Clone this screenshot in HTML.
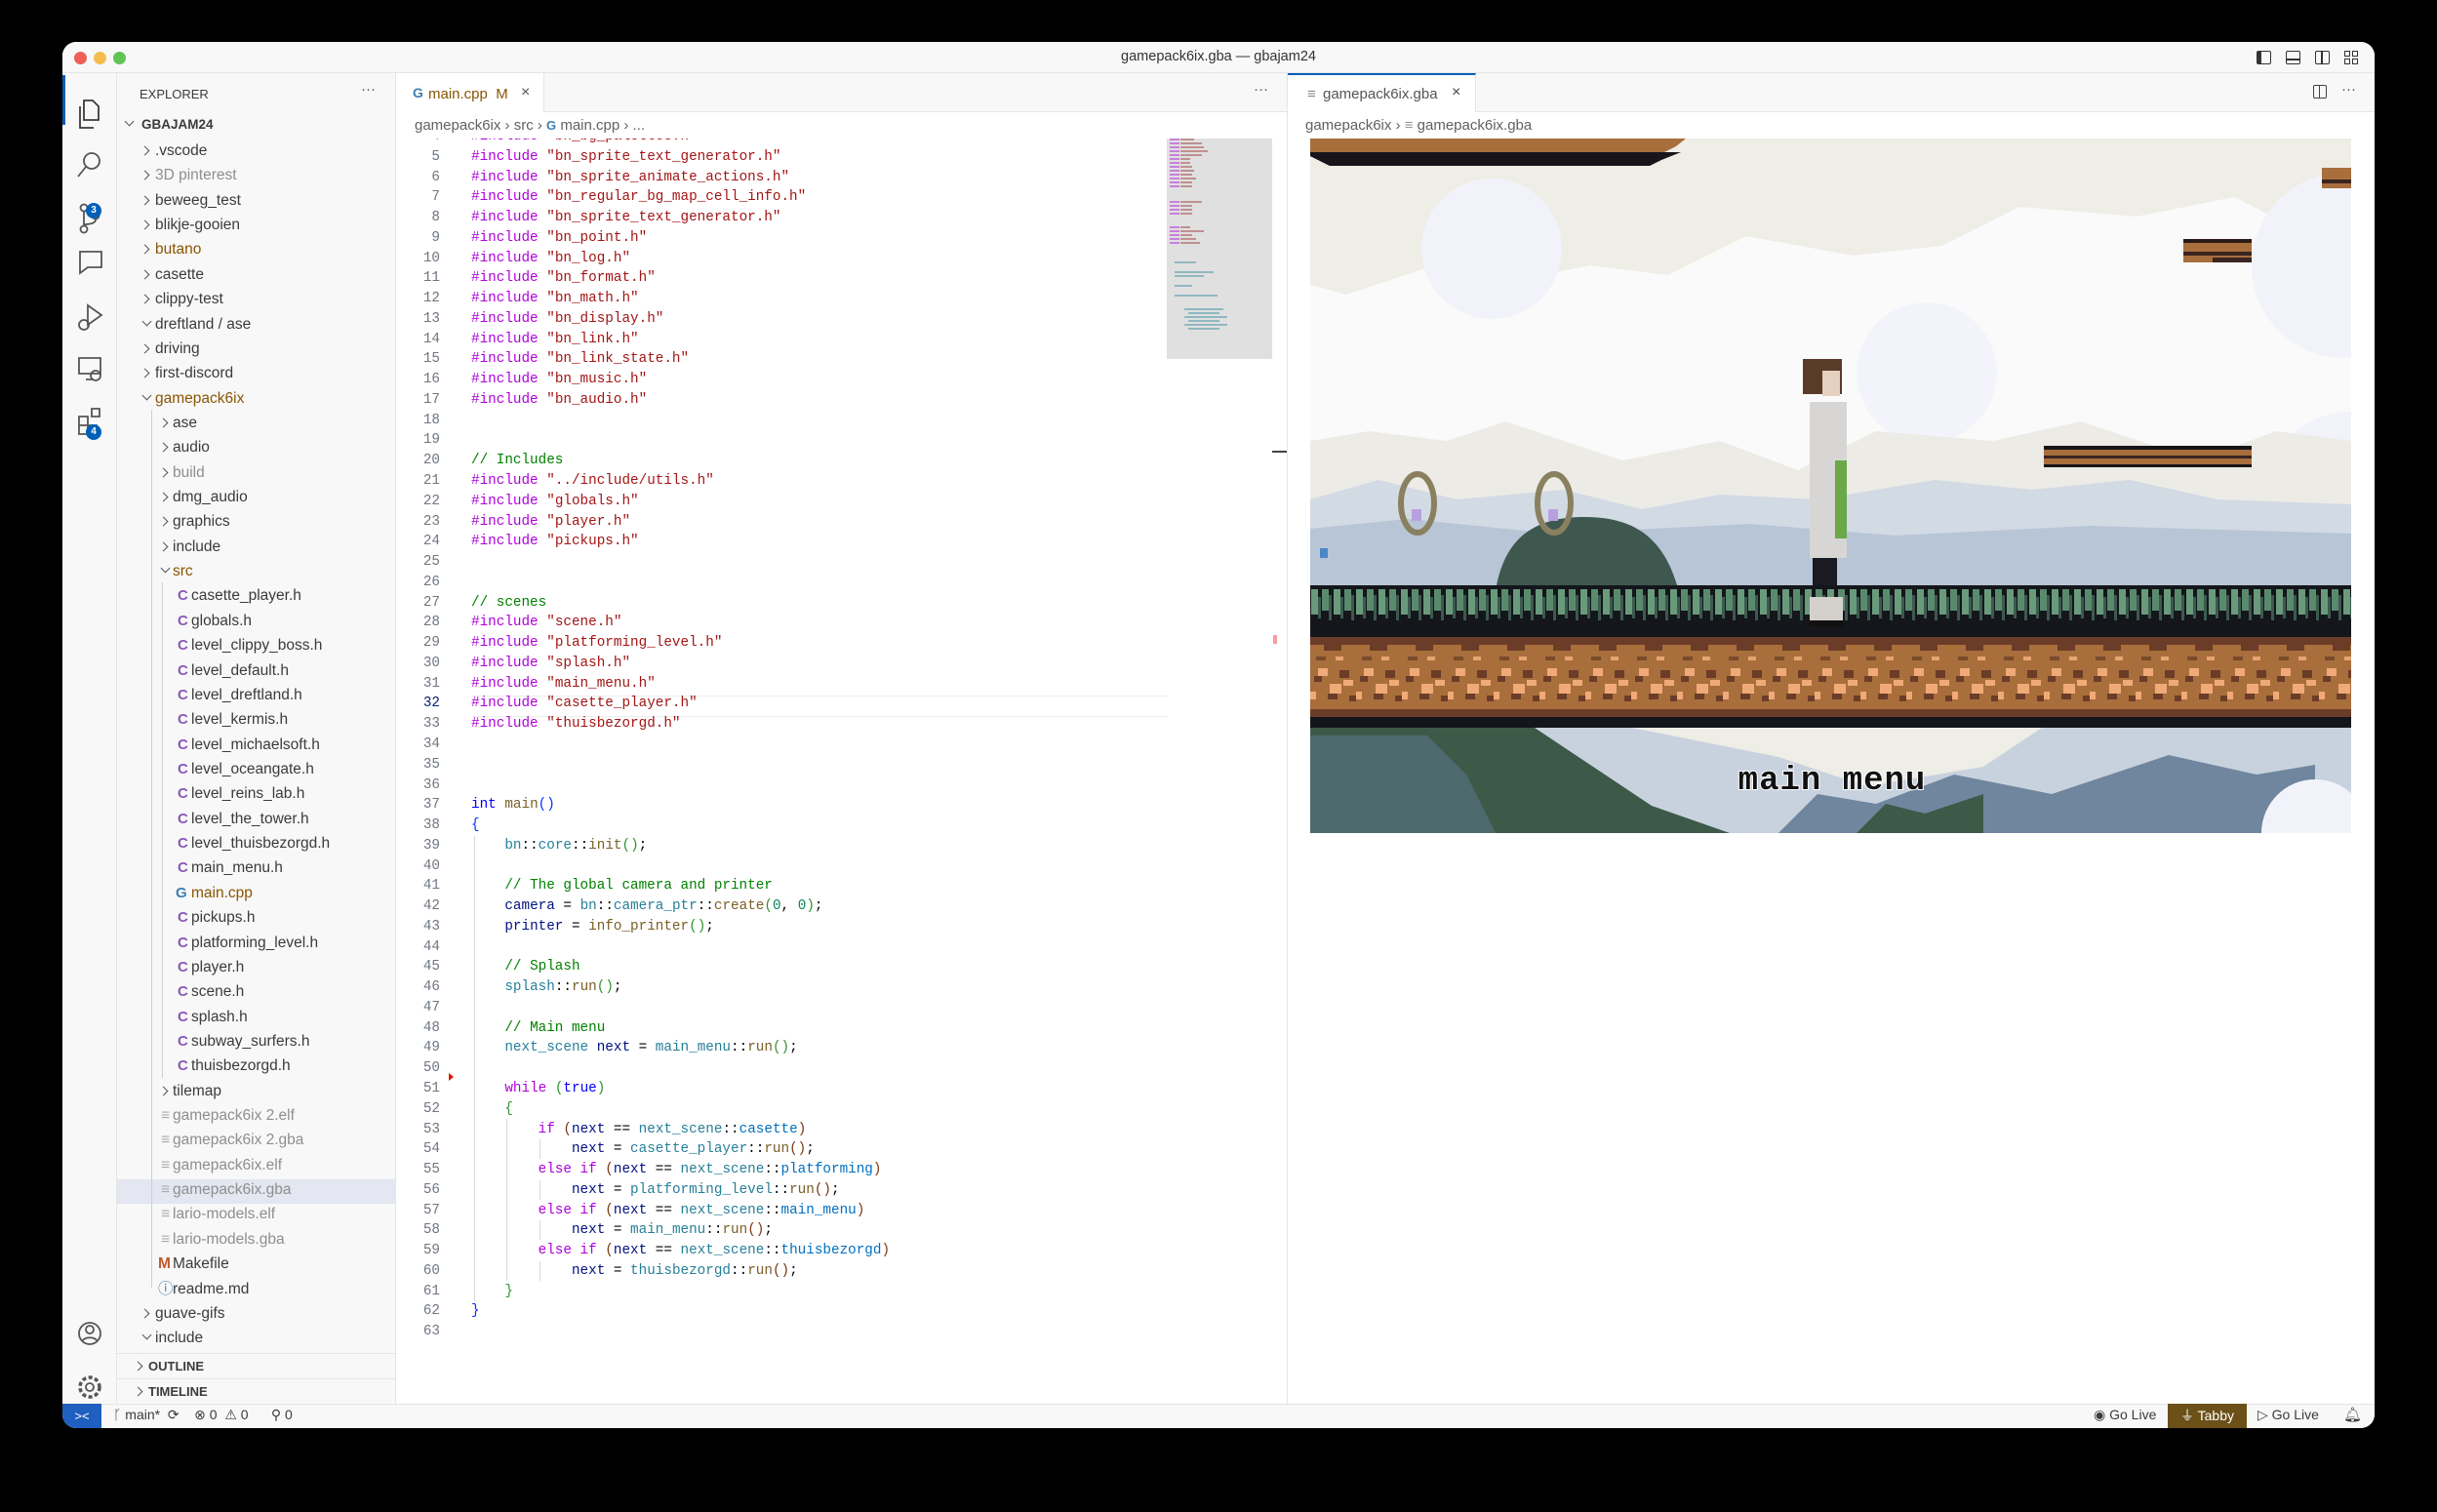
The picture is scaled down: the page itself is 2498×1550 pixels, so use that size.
<!DOCTYPE html>
<html><head><meta charset="utf-8">
<style>
*{margin:0;padding:0;box-sizing:border-box}
body{width:2498px;height:1550px;background:#000;position:relative;overflow:hidden;font-family:"Liberation Sans",sans-serif}
.a{position:absolute}
#win{position:absolute;left:64px;top:43px;width:2370px;height:1421px;background:#f8f8f8;border-radius:14px;overflow:hidden}
.row{position:absolute;left:56px;width:286px;height:25px;line-height:25px;font-size:15.5px;color:#3b3b3b;white-space:nowrap}
.chev{position:absolute;width:7px;height:7px;border-right:1.4px solid #555;border-bottom:1.4px solid #555}
.cr{transform:rotate(-45deg)}
.cd{transform:rotate(45deg)}
.mod{color:#895503}
.ign{color:#8e8e8e}
.dot{position:absolute;left:317px;top:9px;width:9px;height:9px;border-radius:50%;background:#c5b69a}
.ci{position:absolute;color:#8959b8;font-weight:bold;font-size:15px}
#code{position:absolute;left:342px;top:99px;width:913px;height:1298px;background:#fff;overflow:hidden}
.ln{position:absolute;left:0;width:45px;text-align:right;font-family:"Liberation Mono",monospace;font-size:14.3px;color:#6e7681;white-space:pre}
.tx{position:absolute;left:77px;font-family:"Liberation Mono",monospace;font-size:14.3px;color:#000;white-space:pre}
.k{color:#af00db}.s{color:#a31515}.c{color:#008000}.b{color:#0000ff}.v{color:#001080}.f{color:#795e26}.t{color:#267f99}.n{color:#098658}
.p1{color:#0431fa}.p2{color:#319331}.p3{color:#7b3814}
.ig{position:absolute;width:1px;background:#d8d8d8}
</style></head><body>
<div id="win">
 <div class="a" style="left:0;top:0;width:2370px;height:32px;background:#f8f8f8;border-bottom:1px solid #e5e5e5"></div>
 <div class="a" style="left:12px;top:10px;width:13px;height:13px;border-radius:50%;background:#ee5f57"></div>
 <div class="a" style="left:32px;top:10px;width:13px;height:13px;border-radius:50%;background:#f5bd4f"></div>
 <div class="a" style="left:52px;top:10px;width:13px;height:13px;border-radius:50%;background:#5fc454"></div>
 <div class="a" style="left:0;top:7px;width:2370px;text-align:center;font-size:14.5px;color:#333">gamepack6ix.gba — gbajam24</div>
 <div class="a" style="left:2249px;top:9px;width:15px;height:14px;border:1.5px solid #333;border-left-width:5px;border-radius:2px"></div>
 <div class="a" style="left:2279px;top:9px;width:15px;height:14px;border:1.5px solid #333;border-radius:2px"></div>
 <div class="a" style="left:2279px;top:17px;width:15px;height:1.5px;background:#333"></div>
 <div class="a" style="left:2309px;top:9px;width:15px;height:14px;border:1.5px solid #333;border-radius:2px"></div>
 <div class="a" style="left:2315px;top:9px;width:1.5px;height:14px;background:#333"></div>
 <div class="a" style="left:2339px;top:9px;width:6px;height:6px;border:1.5px solid #333"></div>
 <div class="a" style="left:2347px;top:9px;width:6px;height:6px;border:1.5px solid #333"></div>
 <div class="a" style="left:2339px;top:17px;width:6px;height:6px;border:1.5px solid #333"></div>
 <div class="a" style="left:2347px;top:17px;width:6px;height:6px;border:1.5px solid #333"></div>

 <div class="a" style="left:0;top:32px;width:56px;height:1364px;background:#f8f8f8;border-right:1px solid #e5e5e5"></div>
 <div class="a" style="left:0;top:34px;width:3px;height:51px;background:#005fb8"></div>
 <svg class="a" style="left:0;top:32px" width="56" height="1364" fill="none" stroke="#555" stroke-width="1.8">
  <path d="M22 28h9l6 6v14H22z M18 34v22h14" stroke="#3b3b3b"/>
  <circle cx="30" cy="90" r="8"/><path d="M24 96l-8 10"/>
  <circle cx="22" cy="138" r="3.5"/><circle cx="22" cy="160" r="3.5"/><circle cx="34" cy="146" r="3.5"/><path d="M22 142v14M34 150c0 6-12 4-12 6"/>
  <path d="M18 183h22v16H26l-8 6z"/>
  <path d="M26 238l14 10-14 10z"/><circle cx="22" cy="258" r="5"/>
  <path d="M17 292h22v16H17zM24 314h8"/><circle cx="34" cy="310" r="5"/>
  <path d="M17 352h9v9h-9zM17 361h9v9h-9zM26 361h9v9h-9zM30 344h8v8h-8z"/>
  <circle cx="28" cy="1292" r="11"/><circle cx="28" cy="1288" r="4"/><path d="M20 1300c3-5 13-5 16 0"/>
  <circle cx="28" cy="1347" r="4"/><circle cx="28" cy="1347" r="10" stroke-dasharray="4 2.5" stroke-width="3.5"/>
 </svg>
 <div class="a" style="left:24px;top:165px;width:16px;height:16px;border-radius:50%;background:#005fb8;color:#fff;font-size:10px;text-align:center;line-height:16px;font-weight:bold">3</div>
 <div class="a" style="left:24px;top:392px;width:16px;height:16px;border-radius:50%;background:#005fb8;color:#fff;font-size:10px;text-align:center;line-height:16px;font-weight:bold">4</div>

 <div class="a" style="left:56px;top:32px;width:286px;height:1364px;background:#f8f8f8;border-right:1px solid #e5e5e5"></div>
 <div class="a" style="left:79px;top:46px;font-size:13px;color:#3b3b3b">EXPLORER</div>
 <div class="a" style="left:306px;top:40px;font-size:15px;color:#555">···</div>
 <div class="row" style="top:72px"><div class="chev cd" style="left:9px;top:6px"></div><span style="position:absolute;left:25px;font-weight:bold;font-size:13.5px">GBAJAM24</span></div>
 <div class="a" style="left:56px;top:1166px;width:286px;height:25px;background:#e4e6f1"></div>
 <div class="a" style="left:91px;top:377px;width:1px;height:900px;background:#d0d0d0"></div>
 <div class="a" style="left:102px;top:554px;width:1px;height:508px;background:#d0d0d0"></div>
 <div id="tree"></div>
 <div class="a" style="left:56px;top:1344px;width:286px;height:1px;background:#e5e5e5"></div>
 <div class="row" style="top:1345px"><div class="chev cr" style="left:18px;top:9px"></div><span style="position:absolute;left:32px;font-weight:bold;font-size:13px">OUTLINE</span></div>
 <div class="a" style="left:56px;top:1370px;width:286px;height:1px;background:#e5e5e5"></div>
 <div class="row" style="top:1371px"><div class="chev cr" style="left:18px;top:9px"></div><span style="position:absolute;left:32px;font-weight:bold;font-size:13px">TIMELINE</span></div>

 <div class="a" style="left:342px;top:32px;width:913px;height:40px;background:#f8f8f8;border-bottom:1px solid #e5e5e5"></div>
 <div class="a" style="left:342px;top:32px;width:152px;height:41px;background:#fff;border-right:1px solid #e5e5e5"></div>
 <div class="a" style="left:359px;top:44px;font-size:14px;color:#3e7fb3;font-weight:bold">G</div>
 <div class="a" style="left:375px;top:45px;font-size:15px;color:#895503">main.cpp&nbsp; M</div>
 <div class="a" style="left:470px;top:43px;font-size:16px;color:#555">×</div>
 <div class="a" style="left:1221px;top:40px;font-size:15px;color:#555">···</div>
 <div class="a" style="left:342px;top:72px;width:913px;height:27px;background:#fff"></div>
 <div class="a" style="left:361px;top:77px;font-size:15px;color:#616161">gamepack6ix&nbsp;›&nbsp;src&nbsp;›&nbsp;<span style="color:#3e7fb3;font-weight:bold;font-size:13px">G</span>&nbsp;main.cpp&nbsp;›&nbsp;...</div>

 <div id="code">
  <div class="a" style="left:77px;top:571px;width:714px;height:22px;border-top:1px solid #eee;border-bottom:1px solid #eee"></div>
  <div class="ig" style="left:80px;top:715px;height:477px"></div>
  <div class="ig" style="left:113px;top:1005px;height:166px"></div>
  <div class="ig" style="left:147px;top:1026px;height:20px"></div>
  <div class="ig" style="left:147px;top:1068px;height:20px"></div>
  <div class="ig" style="left:147px;top:1109px;height:20px"></div>
  <div class="ig" style="left:147px;top:1151px;height:20px"></div>
  <div class="ln" style="top:-12px;line-height:20.76px">4
5
6
7
8
9
10
11
12
13
14
15
16
17
18
19
20
21
22
23
24
25
26
27
28
29
30
31
<span style="color:#0b216f">32</span>
33
34
35
36
37
38
39
40
41
42
43
44
45
46
47
48
49
50
51
52
53
54
55
56
57
58
59
60
61
62
63</div>
  <div class="a" style="left:54px;top:958px;width:0;height:0;border-left:5px solid #e51400;border-top:4px solid transparent;border-bottom:4px solid transparent"></div>
  <div class="tx" style="top:-12px;line-height:20.76px"><span class="k">#include</span> <span class="s">"bn_bg_palettes.h"</span>
<span class="k">#include</span> <span class="s">"bn_sprite_text_generator.h"</span>
<span class="k">#include</span> <span class="s">"bn_sprite_animate_actions.h"</span>
<span class="k">#include</span> <span class="s">"bn_regular_bg_map_cell_info.h"</span>
<span class="k">#include</span> <span class="s">"bn_sprite_text_generator.h"</span>
<span class="k">#include</span> <span class="s">"bn_point.h"</span>
<span class="k">#include</span> <span class="s">"bn_log.h"</span>
<span class="k">#include</span> <span class="s">"bn_format.h"</span>
<span class="k">#include</span> <span class="s">"bn_math.h"</span>
<span class="k">#include</span> <span class="s">"bn_display.h"</span>
<span class="k">#include</span> <span class="s">"bn_link.h"</span>
<span class="k">#include</span> <span class="s">"bn_link_state.h"</span>
<span class="k">#include</span> <span class="s">"bn_music.h"</span>
<span class="k">#include</span> <span class="s">"bn_audio.h"</span>


<span class="c">// Includes</span>
<span class="k">#include</span> <span class="s">"../include/utils.h"</span>
<span class="k">#include</span> <span class="s">"globals.h"</span>
<span class="k">#include</span> <span class="s">"player.h"</span>
<span class="k">#include</span> <span class="s">"pickups.h"</span>


<span class="c">// scenes</span>
<span class="k">#include</span> <span class="s">"scene.h"</span>
<span class="k">#include</span> <span class="s">"platforming_level.h"</span>
<span class="k">#include</span> <span class="s">"splash.h"</span>
<span class="k">#include</span> <span class="s">"main_menu.h"</span>
<span class="k">#include</span> <span class="s">"casette_player.h"</span>
<span class="k">#include</span> <span class="s">"thuisbezorgd.h"</span>



<span class="b">int</span> <span class="f">main</span><span class="p1">()</span>
<span class="p1">{</span>
    <span class="t">bn</span>::<span class="t">core</span>::<span class="f">init</span><span class="p2">()</span>;

    <span class="c">// The global camera and printer</span>
    <span class="v">camera</span> = <span class="t">bn</span>::<span class="t">camera_ptr</span>::<span class="f">create</span><span class="p2">(</span><span class="n">0</span>, <span class="n">0</span><span class="p2">)</span>;
    <span class="v">printer</span> = <span class="f">info_printer</span><span class="p2">()</span>;

    <span class="c">// Splash</span>
    <span class="t">splash</span>::<span class="f">run</span><span class="p2">()</span>;

    <span class="c">// Main menu</span>
    <span class="t">next_scene</span> <span class="v">next</span> = <span class="t">main_menu</span>::<span class="f">run</span><span class="p2">()</span>;

    <span class="k">while</span> <span class="p2">(</span><span class="b">true</span><span class="p2">)</span>
    <span class="p2">{</span>
        <span class="k">if</span> <span class="p3">(</span><span class="v">next</span> == <span class="t">next_scene</span>::<span style="color:#0070c1">casette</span><span class="p3">)</span>
            <span class="v">next</span> = <span class="t">casette_player</span>::<span class="f">run</span><span class="p3">()</span>;
        <span class="k">else if</span> <span class="p3">(</span><span class="v">next</span> == <span class="t">next_scene</span>::<span style="color:#0070c1">platforming</span><span class="p3">)</span>
            <span class="v">next</span> = <span class="t">platforming_level</span>::<span class="f">run</span><span class="p3">()</span>;
        <span class="k">else if</span> <span class="p3">(</span><span class="v">next</span> == <span class="t">next_scene</span>::<span style="color:#0070c1">main_menu</span><span class="p3">)</span>
            <span class="v">next</span> = <span class="t">main_menu</span>::<span class="f">run</span><span class="p3">()</span>;
        <span class="k">else if</span> <span class="p3">(</span><span class="v">next</span> == <span class="t">next_scene</span>::<span style="color:#0070c1">thuisbezorgd</span><span class="p3">)</span>
            <span class="v">next</span> = <span class="t">thuisbezorgd</span>::<span class="f">run</span><span class="p3">()</span>;
    <span class="p2">}</span>
<span class="p1">}</span>
</div>
  <div class="a" style="left:790px;top:0;width:108px;height:226px;background:#e0e0e0"></div>
  <svg class="a" style="left:790px;top:0" width="70" height="230">
   <g fill="#c880dc"><rect x="3" y="0" width="10" height="2"/><rect x="3" y="4" width="10" height="2"/><rect x="3" y="8" width="10" height="2"/><rect x="3" y="12" width="10" height="2"/><rect x="3" y="16" width="10" height="2"/><rect x="3" y="20" width="10" height="2"/><rect x="3" y="24" width="10" height="2"/><rect x="3" y="28" width="10" height="2"/><rect x="3" y="32" width="10" height="2"/><rect x="3" y="36" width="10" height="2"/><rect x="3" y="40" width="10" height="2"/><rect x="3" y="44" width="10" height="2"/><rect x="3" y="48" width="10" height="2"/><rect x="3" y="64" width="10" height="2"/><rect x="3" y="68" width="10" height="2"/><rect x="3" y="72" width="10" height="2"/><rect x="3" y="76" width="10" height="2"/><rect x="3" y="90" width="10" height="2"/><rect x="3" y="94" width="10" height="2"/><rect x="3" y="98" width="10" height="2"/><rect x="3" y="102" width="10" height="2"/><rect x="3" y="106" width="10" height="2"/></g>
   <g fill="#c09090"><rect x="14" y="0" width="14" height="2"/><rect x="14" y="4" width="22" height="2"/><rect x="14" y="8" width="24" height="2"/><rect x="14" y="12" width="28" height="2"/><rect x="14" y="16" width="22" height="2"/><rect x="14" y="20" width="10" height="2"/><rect x="14" y="24" width="10" height="2"/><rect x="14" y="28" width="12" height="2"/><rect x="14" y="32" width="14" height="2"/><rect x="14" y="36" width="12" height="2"/><rect x="14" y="40" width="16" height="2"/><rect x="14" y="44" width="12" height="2"/><rect x="14" y="48" width="12" height="2"/><rect x="14" y="64" width="22" height="2"/><rect x="14" y="68" width="12" height="2"/><rect x="14" y="72" width="12" height="2"/><rect x="14" y="76" width="12" height="2"/><rect x="14" y="90" width="10" height="2"/><rect x="14" y="94" width="24" height="2"/><rect x="14" y="98" width="12" height="2"/><rect x="14" y="102" width="16" height="2"/><rect x="14" y="106" width="20" height="2"/></g>
   <g fill="#90b8c0"><rect x="8" y="126" width="22" height="2"/><rect x="8" y="136" width="40" height="2"/><rect x="8" y="140" width="30" height="2"/><rect x="8" y="150" width="18" height="2"/><rect x="8" y="160" width="44" height="2"/><rect x="18" y="174" width="40" height="2"/><rect x="22" y="178" width="32" height="2"/><rect x="18" y="182" width="44" height="2"/><rect x="22" y="186" width="32" height="2"/><rect x="18" y="190" width="44" height="2"/><rect x="22" y="194" width="32" height="2"/></g>
  </svg>
  <div class="a" style="left:898px;top:320px;width:15px;height:2px;background:#444"></div>
  <div class="a" style="left:899px;top:509px;width:4px;height:9px;background:#f4a0a0"></div>
 </div>

 <div class="a" style="left:1255px;top:32px;width:1px;height:1364px;background:#e5e5e5"></div>
 <div class="a" style="left:1256px;top:32px;width:1114px;height:40px;background:#f8f8f8;border-bottom:1px solid #e5e5e5"></div>
 <div class="a" style="left:1256px;top:32px;width:193px;height:41px;background:#fff;border-top:2px solid #005fb8;border-right:1px solid #e5e5e5"></div>
 <div class="a" style="left:1276px;top:45px;font-size:15px;color:#888">≡</div>
 <div class="a" style="left:1292px;top:45px;font-size:15px;color:#555">gamepack6ix.gba</div>
 <div class="a" style="left:1424px;top:43px;font-size:16px;color:#444">×</div>
 <div class="a" style="left:2307px;top:44px;width:14px;height:14px;border:1.4px solid #444;border-radius:2px"></div>
 <div class="a" style="left:2313px;top:44px;width:1.4px;height:14px;background:#444"></div>
 <div class="a" style="left:2336px;top:40px;font-size:15px;color:#555">···</div>
 <div class="a" style="left:1256px;top:72px;width:1114px;height:1324px;background:#fff"></div>
 <div class="a" style="left:1274px;top:77px;font-size:15px;color:#616161">gamepack6ix&nbsp;›&nbsp;<span style="color:#999">≡</span>&nbsp;gamepack6ix.gba</div>

 <svg class="a" style="left:1279px;top:99px" width="1067" height="712" viewBox="0 0 1067 712">
  <defs>
   <pattern id="grass" x="0" y="458" width="23" height="42" patternUnits="userSpaceOnUse">
    <rect width="23" height="42" fill="#14161b"/>
    <rect x="1" y="4" width="7" height="26" fill="#6a9a7c"/>
    <rect x="12" y="4" width="7" height="22" fill="#5a8a6e"/>
    <rect x="8" y="12" width="3" height="22" fill="#3c5a4e"/>
    <rect x="19" y="10" width="3" height="26" fill="#3c5a4e"/>
   </pattern>
   <pattern id="dirt" x="0" y="511" width="47" height="82" patternUnits="userSpaceOnUse">
    <rect width="47" height="82" fill="#a86e3c"/>
    <rect x="0" y="0" width="47" height="8" fill="#6b3c28"/>
    <rect x="14" y="8" width="18" height="6" fill="#6b3c28"/>
    <rect x="0" y="74" width="47" height="8" fill="#6b3c28"/>
    <rect x="6" y="20" width="10" height="4" fill="#7a4a2a"/><rect x="26" y="20" width="8" height="4" fill="#e8a474"/>
    <rect x="8" y="32" width="10" height="8" fill="#f0aa78"/><rect x="4" y="40" width="8" height="6" fill="#6b3c28"/>
    <rect x="30" y="34" width="10" height="8" fill="#6b3c28"/><rect x="34" y="44" width="10" height="6" fill="#f0aa78"/>
    <rect x="20" y="48" width="12" height="10" fill="#f0aa78"/><rect x="18" y="58" width="10" height="6" fill="#6b3c28"/>
    <rect x="0" y="56" width="6" height="8" fill="#f0aa78"/><rect x="40" y="60" width="7" height="6" fill="#6b3c28"/>
   </pattern>
  </defs>
  <rect width="1067" height="712" fill="#fafafa"/>
  <path d="M0 0h1067v70l-80 10-40-20-100 20-120-10-80 40-90 10-110-20-80 40-80-10-100 20-60-20-90 30-37-10z" fill="#eeede6"/>
  <circle cx="186" cy="113" r="72" fill="#f2f3fa"/>
  <circle cx="632" cy="240" r="72" fill="#f3f4fb"/>
  <circle cx="1060" cy="130" r="95" fill="#f2f3fa"/>
  <circle cx="1067" cy="370" r="90" fill="#f2f3fa"/>
  <path d="M0 310l60-10 80 10 60-20 120 40 100-20 80 30 80-40 120 10 90-20 120 40 80-30 77 10v201H0z" fill="#ecebe6"/>
  <path d="M0 370l70-20 80 20 110-10 80 20 80-15 100 5 120-20 100 10 100-10 90 20 137 5v89H0z" fill="#d2dae4"/>
  <path d="M0 400l100-10 150 15 200-10 150 12 200-10 267 8v56H0z" fill="#b8c5d6"/>
  <path d="M191 458c10-50 40-70 90-70s80 20 95 70z" fill="#3e574f"/>
  <g fill="none" stroke="#8a8060" stroke-width="6"><ellipse cx="110" cy="374" rx="17" ry="30"/><ellipse cx="250" cy="374" rx="17" ry="30"/></g>
  <g fill="#b8a0e0"><rect x="104" y="380" width="10" height="12"/><rect x="244" y="380" width="10" height="12"/></g>
  <rect x="10" y="420" width="8" height="10" fill="#4a88c8"/>
  <path d="M0 0h385l-10 8-12 6-20 8-12 6H20L0 18z" fill="#a86e3c"/>
  <path d="M0 14h380l-20 8-12 6H20L0 18z" fill="#17151a"/>
  <rect x="1037" y="30" width="30" height="21" fill="#a86e3c"/><rect x="1037" y="42" width="30" height="4" fill="#3a2420"/>
  <rect x="895" y="103" width="70" height="24" fill="#a86e3c"/><rect x="895" y="103" width="70" height="4" fill="#2a1a18"/><rect x="895" y="116" width="70" height="4" fill="#3a2420"/><rect x="925" y="122" width="40" height="5" fill="#3a2420"/>
  <rect x="752" y="315" width="213" height="22" fill="#a86e3c"/><rect x="752" y="315" width="213" height="4" fill="#17151a"/><rect x="752" y="325" width="213" height="3" fill="#3a2420"/><rect x="752" y="334" width="213" height="3" fill="#17151a"/>
  <rect x="505" y="226" width="40" height="36" fill="#5a3a28"/>
  <rect x="525" y="238" width="18" height="26" fill="#e6d0c0"/>
  <rect x="512" y="270" width="38" height="160" fill="#d8d6d4"/>
  <rect x="538" y="330" width="12" height="80" fill="#6aa84a"/>
  <rect x="515" y="430" width="25" height="38" fill="#1a1a22"/>
  <rect x="515" y="460" width="25" height="24" fill="#1e2a4a"/>
  <rect x="0" y="458" width="1067" height="42" fill="url(#grass)"/>
  <rect x="0" y="500" width="1067" height="11" fill="#14161b"/>
  <rect x="0" y="511" width="1067" height="82" fill="url(#dirt)"/>
  <rect x="0" y="593" width="1067" height="11" fill="#14161b"/>
  <rect x="512" y="470" width="34" height="24" fill="#d4d0cc"/><rect x="512" y="494" width="34" height="6" fill="#111"/>
  <rect x="0" y="604" width="1067" height="108" fill="#c8d2de"/>
  <path d="M330 604h420l-60 40-120 20-90-30z" fill="#eeede6"/>
  <path d="M0 604h230l60 40 60 40 80 28H0z" fill="#3d5a48"/>
  <path d="M0 612h120l40 40 30 60H0z" fill="#5a7488" opacity=".6"/>
  <path d="M480 712l40-40 60 10 80-30 100 20 120-40 90 20 60-10v70z" fill="#6f869e"/>
  <path d="M560 712l30-30 40 10 60-20v40z" fill="#3d5a48"/>
  <circle cx="1030" cy="712" r="55" fill="#f2f3fa"/>
  <text x="535" y="667" text-anchor="middle" font-family="Liberation Mono,monospace" font-weight="bold" font-size="34" fill="#111" stroke="#fff" stroke-width="2" paint-order="stroke" letter-spacing="1">main menu</text>
 </svg>

 <div class="a" style="left:0;top:1396px;width:2370px;height:25px;background:#f8f8f8;border-top:1px solid #e5e5e5"></div>
 <div class="a" style="left:0;top:1396px;width:40px;height:25px;background:#1f5fbf;color:#fff;font-size:13px;text-align:center;line-height:25px">&gt;&lt;</div>
 <div class="a" style="left:52px;top:1399px;font-size:14px;color:#3b3b3b;white-space:pre">ᚴ main*  ⟳    ⊗ 0  ⚠ 0      ⚲ 0</div>
 <div class="a" style="left:2082px;top:1399px;font-size:14px;color:#3b3b3b">◉ Go Live</div>
 <div class="a" style="left:2158px;top:1396px;width:81px;height:25px;background:#6b5018;color:#fff;font-size:14px;line-height:25px;text-align:center">⏚ Tabby</div>
 <div class="a" style="left:2250px;top:1399px;font-size:14px;color:#3b3b3b">▷ Go Live</div>
 <div class="a" style="left:2338px;top:1398px;font-size:15px;color:#3b3b3b">🔔︎</div>
</div>

<script>
var rows=[
[0,'.vscode','c',0],[0,'3D pinterest','c','ign'],[0,'beweeg_test','c',0],[0,'blikje-gooien','c',0],[0,'butano','c','mod',1],[0,'casette','c',0],[0,'clippy-test','c',0],[0,'dreftland / ase','d',0],[0,'driving','c',0],[0,'first-discord','c',0],[0,'gamepack6ix','d','mod',1],
[1,'ase','c',0],[1,'audio','c',0],[1,'build','c','ign'],[1,'dmg_audio','c',0],[1,'graphics','c',0],[1,'include','c',0],[1,'src','d','mod',1],
[2,'casette_player.h','C',0],[2,'globals.h','C',0],[2,'level_clippy_boss.h','C',0],[2,'level_default.h','C',0],[2,'level_dreftland.h','C',0],[2,'level_kermis.h','C',0],[2,'level_michaelsoft.h','C',0],[2,'level_oceangate.h','C',0],[2,'level_reins_lab.h','C',0],[2,'level_the_tower.h','C',0],[2,'level_thuisbezorgd.h','C',0],[2,'main_menu.h','C',0],[2,'main.cpp','G','mod',0,'M'],[2,'pickups.h','C',0],[2,'platforming_level.h','C',0],[2,'player.h','C',0],[2,'scene.h','C',0],[2,'splash.h','C',0],[2,'subway_surfers.h','C',0],[2,'thuisbezorgd.h','C',0],
[1,'tilemap','c',0],[1,'gamepack6ix 2.elf','F','ign'],[1,'gamepack6ix 2.gba','F','ign'],[1,'gamepack6ix.elf','F','ign'],[1,'gamepack6ix.gba','F','ign'],[1,'lario-models.elf','F','ign'],[1,'lario-models.gba','F','ign'],[1,'Makefile','M',0],[1,'readme.md','I',0],
[0,'guave-gifs','c',0],[0,'include','d',0]];
var h='';
rows.forEach(function(r,i){
 var top=99+i*25.36;
 var d=r[0],ty=r[2];
 var cx=[27,46,0][d];var tx=[39,57,76][d];
 var inner='';
 if(ty=='c')inner+='<div class="chev cr" style="left:'+(cx-2)+'px;top:9px"></div>';
 else if(ty=='d')inner+='<div class="chev cd" style="left:'+cx+'px;top:6px"></div>';
 else if(ty=='C')inner+='<span class="ci" style="left:62px">C</span>';
 else if(ty=='G')inner+='<span class="ci" style="left:60px;color:#3e7fb3">G</span>';
 else if(ty=='F')inner+='<span style="position:absolute;left:45px;color:#aaa">≡</span>';
 else if(ty=='M')inner+='<span style="position:absolute;left:42px;color:#c05a2a;font-weight:bold">M</span>';
 else if(ty=='I')inner+='<span style="position:absolute;left:42px;color:#3e7fb3">ⓘ</span>';
 inner+='<span class="'+(r[3]||'')+'" style="position:absolute;left:'+tx+'px">'+r[1]+'</span>';
 if(r[4])inner+='<div class="dot"></div>';
 if(r[5])inner+='<span class="mod" style="position:absolute;left:317px">M</span>';
 h+='<div class="row" style="top:'+top+'px">'+inner+'</div>';
});
document.getElementById('tree').innerHTML=h;
</script>
</body></html>
